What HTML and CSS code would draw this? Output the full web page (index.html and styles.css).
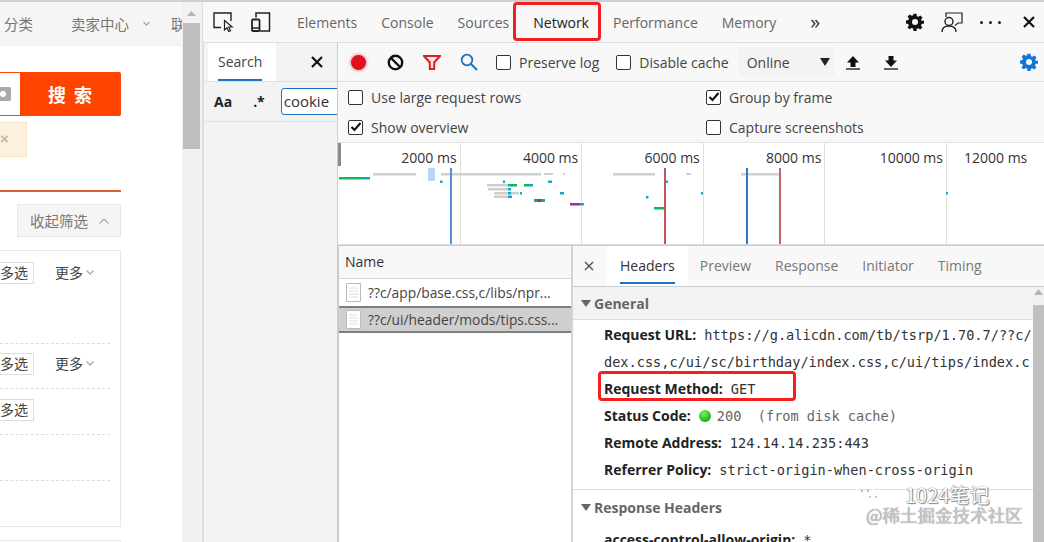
FILE: index.html
```html
<!DOCTYPE html>
<html lang="zh">
<head>
<meta charset="utf-8">
<title>Network</title>
<link rel="stylesheet" href="styles.css">
</head>
<body>
<div class="strip"></div>
<div class="app">
  <section class="page">
    <div class="page-main">
      <header class="site-nav">
        <span class="nav-cat">分类</span>
        <span class="nav-div"></span>
        <span class="nav-seller">卖家中心</span>
        <svg class="nav-caret" width="7" height="5" viewBox="0 0 7 5"><path d="M0.5 1l3 3 3-3" fill="none" stroke="#aaa" stroke-width="1.3"/></svg>
        <span class="nav-more">联</span>
      </header>
      <div class="search-row">
        <div class="search-input">
          <svg width="11" height="16" viewBox="0 0 11 16"><path d="M0 1h9a2 2 0 0 1 2 2v10a2 2 0 0 1-2 2H0z" fill="#a9a9a9"/><circle cx="3" cy="8" r="3" fill="#fff"/></svg>
        </div>
        <div class="search-btn">搜 索</div>
      </div>
      <div class="tip"><span>×</span></div>
      <div class="rule"></div>
      <div class="collapse-row"><div class="collapse-btn">收起筛选 <svg width="10" height="6" viewBox="0 0 10 6"><path d="M0.5 5.5L5 1l4.500 4.500" fill="none" stroke="#aaa" stroke-width="1.200"/></svg></div></div>
      <div class="filter-box">
        <div class="f-row f-row1"><span class="multi">多选</span><span class="more">更多<svg width="8" height="5" viewBox="0 0 8 5"><path d="M0.500 0.500L4 4l3.500-3.500" fill="none" stroke="#aaa" stroke-width="1.300"/></svg></span></div>
        <div class="f-row f-row2"><span class="multi">多选</span><span class="more">更多<svg width="8" height="5" viewBox="0 0 8 5"><path d="M0.500 0.500L4 4l3.500-3.500" fill="none" stroke="#aaa" stroke-width="1.300"/></svg></span></div>
        <div class="f-row f-row3"><span class="multi">多选</span></div>
        <div class="f-row f-row4"></div>
      </div>
      <div class="next-box"></div>
    </div>
    <div class="page-scroll">
      <svg class="up" width="9" height="5" viewBox="0 0 9 5"><path d="M4.500 0L9 5H0z" fill="#b5b5b5"/></svg>
      <div class="page-thumb"></div>
    </div>
  </section>

  <section class="devtools">
    <nav class="main-tabs">
      <div class="tool-ic first">
        <svg width="22" height="20" viewBox="0 0 22 20"><path d="M8 15.500H1V1h17v8" fill="none" stroke="#222" stroke-width="1.400"/><path d="M11.500 8.500v9.500l2.500-2.300 1.700 3.800 1.800-.8-1.700-3.700h3.400z" fill="#fff" stroke="#222" stroke-width="1.200"/></svg>
      </div>
      <div class="tool-ic">
        <svg width="20" height="20" viewBox="0 0 20 20"><path d="M5 5.500V1h13.500v18H9" fill="none" stroke="#222" stroke-width="1.500"/><rect x="1" y="7.500" width="7.500" height="11.500" rx="1" fill="none" stroke="#222" stroke-width="1.800"/><path d="M1 16h7.500" stroke="#222" stroke-width="1.500"/></svg>
      </div>
      <span class="tab t-elements">Elements</span>
      <span class="tab">Console</span>
      <span class="tab">Sources</span>
      <span class="tab active">Network</span>
      <span class="tab">Performance</span>
      <span class="tab">Memory</span>
      <span class="chev">»</span>
      <div class="tab-right">
        <svg class="gear" width="18" height="18" viewBox="0 0 24 24"><path fill="#111" fill-rule="evenodd" d="M10 1h4l.6 3.200 1.900.8 2.700-1.800 2.800 2.800-1.800 2.700.8 1.900L24 10v4l-3.200.6-.8 1.900 1.800 2.700-2.800 2.800-2.700-1.800-1.900.8L14 24h-4l-.6-3.200-1.900-.8-2.700 1.800L2 19.200l1.800-2.700-.8-1.900L0 14v-4l3.200-.6.8-1.900L2.200 4.800 5 2l2.700 1.800 1.900-.8zM12 8a4 4 0 1 0 0 8 4 4 0 0 0 0-8z"/></svg>
        <svg class="fb" width="22" height="21" viewBox="0 0 22 21"><path d="M5 5V1h16v10h-4l-3 2.500" fill="none" stroke="#222" stroke-width="1.200"/><circle cx="8" cy="9.500" r="4" fill="#f8f8f8" stroke="#222" stroke-width="1.400"/><path d="M1 20c0-4 3-6 7-6s7 2 7 6" fill="none" stroke="#222" stroke-width="1.400"/></svg>
        <span class="dots"><i></i><i></i><i></i></span>
        <svg class="close" width="12" height="12" viewBox="0 0 12 12"><path d="M1 1l10 10M11 1L1 11" stroke="#111" stroke-width="2.200"/></svg>
      </div>
    </nav>

    <div class="work">
      <aside class="search-panel">
        <div class="sp-head">
          <span class="sp-tab">Search</span>
          <svg width="12" height="12" viewBox="0 0 12 12"><path d="M1 1l10 10M11 1L1 11" stroke="#111" stroke-width="2.200"/></svg>
        </div>
        <div class="sp-row">
          <b class="aa">Aa</b>
          <b class="re">.*</b>
          <span class="sp-input">cookie</span>
        </div>
      </aside>

      <div class="network">
        <div class="net-bar">
          <span class="rec"></span>
          <svg class="ic-block" width="17" height="17" viewBox="0 0 17 17"><circle cx="8.500" cy="8.500" r="6.700" fill="none" stroke="#111" stroke-width="2.400"/><path d="M4 4l9 9" stroke="#111" stroke-width="2.400"/></svg>
          <svg class="ic-funnel" width="18" height="15" viewBox="0 0 18 15"><path d="M1 1h16l-5.800 6.500V14H6.800V7.500z" fill="#fbe5e5" stroke="#d81e1e" stroke-width="2"/></svg>
          <svg class="ic-search" width="18" height="18" viewBox="0 0 18 18"><circle cx="7" cy="7" r="5.300" fill="none" stroke="#1a73c5" stroke-width="1.800"/><path d="M11 11l6 6" stroke="#1a73c5" stroke-width="2"/></svg>
          <label class="chk-label c-preserve"><span class="chk"></span>Preserve log</label>
          <label class="chk-label c-cache"><span class="chk"></span>Disable cache</label>
          <div class="throttle"><span>Online</span><svg width="10" height="8" viewBox="0 0 10 8"><path d="M0 0h10L5 8z" fill="#222"/></svg></div>
          <svg class="ic-up" width="14" height="15" viewBox="0 0 14 15"><path d="M7 1l6 6.500H9.500V12h-5V7.500H1z" fill="#111"/><path d="M0 14h14" stroke="#111" stroke-width="1.300"/></svg>
          <svg class="ic-down" width="14" height="15" viewBox="0 0 14 15"><path d="M7 12L1 5.500h3.500V1h5v4.500H13z" fill="#111"/><path d="M0 14h14" stroke="#111" stroke-width="1.300"/></svg>
          <svg class="ic-gear" width="18" height="18" viewBox="0 0 24 24"><path fill="#0f78d4" fill-rule="evenodd" d="M10 1h4l.6 3.200 1.900.8 2.700-1.800 2.800 2.800-1.800 2.700.8 1.900L24 10v4l-3.200.6-.8 1.900 1.800 2.700-2.800 2.800-2.700-1.800-1.900.8L14 24h-4l-.6-3.200-1.900-.8-2.700 1.800L2 19.200l1.800-2.700-.8-1.900L0 14v-4l3.200-.6.8-1.900L2.200 4.800 5 2l2.700 1.800 1.900-.8zM12 8a4 4 0 1 0 0 8 4 4 0 0 0 0-8z"/></svg>
        </div>
        <div class="net-settings">
          <label class="chk-label"><span class="chk"></span>Use large request rows</label>
          <label class="chk-label"><span class="chk on"><svg width="12" height="10" viewBox="0 0 12 10"><path d="M1.500 5l3 3 6-7" fill="none" stroke="#111" stroke-width="2.200"/></svg></span>Group by frame</label>
          <label class="chk-label"><span class="chk on"><svg width="12" height="10" viewBox="0 0 12 10"><path d="M1.500 5l3 3 6-7" fill="none" stroke="#111" stroke-width="2.200"/></svg></span>Show overview</label>
          <label class="chk-label"><span class="chk"></span>Capture screenshots</label>
        </div>
        <div class="timeline">
          <div class="ticks">
            <span>2000 ms</span><span>4000 ms</span><span>6000 ms</span><span>8000 ms</span><span>10000 ms</span><span>12000 ms</span>
          </div>
          <svg class="bars" width="706" height="102" viewBox="338 143 706 102">
            <rect x="338" y="143" width="3" height="23" fill="#8a8a8a"/>
            <g fill="#cfcfcf">
              <rect x="373" y="173" width="43" height="2.500"/><rect x="441" y="173" width="100" height="2.500"/><rect x="544" y="173" width="9" height="2"/><rect x="563" y="173" width="2" height="2"/><rect x="613" y="173" width="42" height="2.500"/><rect x="686" y="173" width="5" height="2"/><rect x="741" y="173" width="39" height="2.500"/>
              <rect x="487" y="184" width="21" height="2.500"/><rect x="488" y="188" width="20" height="2.500"/><rect x="494" y="192" width="14" height="2.500"/><rect x="511" y="192" width="8" height="2.500"/><rect x="494" y="195.500" width="14" height="2.500"/>
            </g>
            <rect x="428" y="168" width="7" height="13" fill="#b8d5f7"/>
            <g fill="#0cb860">
              <rect x="339" y="177" width="25" height="2.500"/><rect x="508" y="184" width="9" height="2.500"/><rect x="524" y="184" width="6" height="2.500"/><rect x="534" y="199" width="3" height="3"/><rect x="541" y="199" width="4" height="3"/><rect x="654" y="207" width="10" height="2.500"/>
            </g>
            <g fill="#1ba3c9">
              <rect x="364" y="177" width="6" height="2.500"/><rect x="440" y="180.500" width="2.500" height="2.500"/><rect x="503" y="180.500" width="2" height="2.500"/><rect x="548" y="180.500" width="4" height="2.500"/><rect x="530" y="184" width="3" height="2.500"/><rect x="508" y="188" width="3" height="2.500"/><rect x="508" y="192" width="3" height="2.500"/><rect x="520" y="192" width="2" height="2.500"/><rect x="560" y="192" width="4" height="2.500"/><rect x="508" y="195.500" width="4" height="2.500"/><rect x="580" y="203" width="4" height="2.500"/><rect x="664" y="180.500" width="4" height="2.500"/><rect x="646" y="196" width="2.500" height="2.500"/><rect x="701" y="192" width="2" height="2.500"/><rect x="946" y="192" width="2" height="2.500"/>
            </g>
            <g fill="#a32f8e">
              <rect x="537" y="199" width="4" height="3"/><rect x="570" y="203" width="10" height="2.500"/>
            </g>
            <rect x="450" y="168" width="2" height="76" fill="#5393d3"/>
            <rect x="746" y="168" width="2" height="76" fill="#2a7ccb"/>
            <rect x="664" y="168" width="2" height="76" fill="#c2565c"/>
            <rect x="779" y="168" width="2" height="76" fill="#bc666c"/>
          </svg>
        </div>
        <div class="split">
          <div class="names">
            <div class="names-head">Name</div>
            <div class="req">
              <svg width="15" height="19" viewBox="0 0 15 19"><path d="M.5.500h14v18H.500z" fill="#fff" stroke="#bbb"/><path d="M3 5h9M3 8h9M3 11h9M3 14h9" stroke="#ddd"/></svg>
              <span>??c/app/base.css,c/libs/npr...</span>
            </div>
            <div class="req sel">
              <svg width="15" height="19" viewBox="0 0 15 19"><path d="M.5.500h14v18H.500z" fill="#fff" stroke="#bbb"/><path d="M3 5h9M3 8h9M3 11h9M3 14h9" stroke="#ddd"/></svg>
              <span>??c/ui/header/mods/tips.css...</span>
            </div>
          </div>
          <div class="details">
            <div class="d-tabs">
              <svg class="d-x" width="10" height="10" viewBox="0 0 10 10"><path d="M1 1l8 8M9 1L1 9" stroke="#555" stroke-width="1.500"/></svg>
              <span class="d-tab on">Headers</span>
              <span class="d-tab">Preview</span>
              <span class="d-tab">Response</span>
              <span class="d-tab">Initiator</span>
              <span class="d-tab">Timing</span>
            </div>
            <div class="d-body">
              <div class="d-content">
                <div class="sec-head"><i class="tri"></i>General</div>
                <div class="rows">
                  <div class="kv"><b>Request URL:</b><code>https://g.alicdn.com/tb/tsrp/1.70.7/??c/</code></div>
                  <div class="kv"><code class="wrap">dex.css,c/ui/sc/birthday/index.css,c/ui/tips/index.c</code></div>
                  <div class="kv"><b>Request Method:</b><code>GET</code></div>
                  <div class="kv"><b>Status Code:</b><span class="dot"></span><code class="dim">200  (from disk cache)</code></div>
                  <div class="kv"><b>Remote Address:</b><code>124.14.14.235:443</code></div>
                  <div class="kv"><b>Referrer Policy:</b><code>strict-origin-when-cross-origin</code></div>
                </div>
                <div class="sec-head2"><i class="tri"></i>Response Headers</div>
                <div class="kv kv-last"><b>access-control-allow-origin:</b><code>*</code></div>
              </div>
              <div class="d-scroll">
                <svg width="9" height="6" viewBox="0 0 9 6"><path d="M4.500 0L9 6H0z" fill="#b5b5b5"/></svg>
                <div class="d-thumb"></div>
              </div>
            </div>
          </div>
        </div>
      </div>
    </div>
  </section>
</div>

<div class="mark mark-net"></div>
<div class="mark mark-method"></div>

<div class="wm">
  <svg class="wm-logo" width="28" height="26" viewBox="0 0 28 26"><g fill="none" stroke="#fff" stroke-width="1.500"><ellipse cx="10" cy="10" rx="9" ry="8"/><ellipse cx="18" cy="15" rx="8" ry="6.500"/></g><g fill="#bbb"><circle cx="7" cy="8" r="1.200"/><circle cx="13" cy="8" r="1.200"/><circle cx="15" cy="14" r="1"/><circle cx="21" cy="14" r="1"/></g></svg>
  <span class="wm-title">1024笔记</span>
  <span class="wm-sub">@稀土掘金技术社区</span>
</div>
</body>
</html>
```

FILE: styles.css
```css
* { box-sizing: border-box; }
html, body { margin: 0; padding: 0; }
body {
  width: 1044px; height: 542px; overflow: hidden; position: relative;
  font-family: "Open Sans", "Noto Sans CJK SC", sans-serif;
  font-size: 14px; color: #333; background: #fff;
}
.strip { height: 2px; background: #cfcfcf; }
.app { display: flex; height: 540px; }

/* left web page */
.page { width: 203px; flex: none; display: flex; overflow: hidden; background: #fff; }
.page-main { width: 182px; flex: none; overflow: hidden; font-family: "Noto Sans CJK SC", sans-serif; }
.site-nav {
  height: 44px; background: #f5f5f5; border-bottom: 1px solid #eee;
  display: flex; align-items: center; color: #777; font-size: 14.500px; white-space: nowrap; overflow: hidden;
}
.nav-cat { margin-left: 4px; width: 30px; }
.nav-div { width: 1px; height: 13px; background: #ddd; margin-left: 23px; }
.nav-seller { margin-left: 15px; width: 60px; }
.nav-caret { margin-left: 14px; flex: none; }
.nav-more { margin-left: 21px; }
.search-row { display: flex; width: 121px; height: 44px; margin-top: 26px; }
.search-input {
  width: 21px; height: 44px; border: 1px solid #f40; border-left: 0;
  display: flex; align-items: center; background: #fff;
}
.search-btn {
  width: 100px; height: 44px; background: #f40; color: #fff; border-radius: 0 2px 2px 0;
  font-size: 18px; font-weight: 700; text-align: center; line-height: 44px; letter-spacing: 2px;
}
.tip {
  width: 27px; height: 35px; margin-top: 6px; background: #fdf1de; border: 1px solid #f8e6c8; border-left: 0;
  color: #bbb; font: 700 15px/32px "Liberation Sans", sans-serif;
}
.rule { width: 121px; height: 2px; background: #d9602b; margin-top: 33px; }
.collapse-row { display: flex; justify-content: flex-end; width: 121px; margin-top: 12px; }
.collapse-btn {
  width: 104px; height: 33px; border: 1px solid #e8e8e8; background: #f5f5f5; color: #777;
  font-size: 14.500px; display: flex; align-items: center; gap: 11px; padding-left: 12px;
}
.filter-box { width: 121px; height: 277px; margin-top: 13px; border: 1px solid #e8e8e8; border-left: 0; padding-right: 10px; }
.f-row { display: flex; align-items: flex-start; border-bottom: 1px dashed #ddd; font-size: 14px; color: #444; }
.f-row1 { height: 93px; padding-top: 11px; }
.f-row2 { height: 45px; padding-top: 9px; }
.f-row3 { height: 46px; padding-top: 10px; }
.f-row4 { height: 46px; }
.multi { width: 34px; height: 22px; border: 1px solid #ddd; border-left: 0; text-align: right; padding-right: 5px; line-height: 19px; flex: none; }
.more { margin-left: 21px; display: flex; align-items: center; gap: 3px; line-height: 20px; }
.next-box { width: 121px; height: 10px; margin-top: 13px; border: 1px solid #e8e8e8; border-left: 0; }
.page-scroll { width: 21px; flex: none; background: #f1f1f1; border-right: 1px solid #ddd; display: flex; flex-direction: column; align-items: center; padding-top: 9px; }
.page-scroll .up { margin-right: 2px; }
.page-thumb { width: 17px; height: 126px; background: #bfbfbf; margin: 7px 2px 0 0; }

/* devtools */
.devtools { flex: 1; min-width: 0; display: flex; flex-direction: column; background: #f8f8f8; }
.main-tabs { height: 41px; flex: none; display: flex; align-items: center; border-bottom: 1px solid #ddd; color: #666; white-space: nowrap; background: #f8f8f8; }
.tool-ic { display: flex; align-items: center; }
.tool-ic.first { margin-left: 10px; }
.tool-ic + .tool-ic { margin-left: 16px; }
.tab { padding: 0 12px; }
.t-elements { margin-left: 14px; }
.tab.active { color: #222; }
.tab + .tab { margin-left: 0; }
.chev { margin-left: 22px; font-size: 20px; line-height: 20px; color: #333; }
.tab-right { margin-left: auto; display: flex; align-items: center; padding-right: 9px; }
.fb { margin-left: 17px; }
.dots { display: flex; gap: 6px; margin-left: 17px; }
.dots i { width: 3px; height: 3px; border-radius: 50%; background: #222; }
.close { margin-left: 22px; }
.gear { flex: none; }

.work { flex: 1; min-height: 0; display: flex; }
.search-panel { width: 135px; flex: none; background: #f3f3f3; border-left: 1px solid #ddd; border-right: 1px solid #ccc; overflow: hidden; }
.sp-head { height: 39px; display: flex; align-items: center; border-bottom: 1px solid #e0e0e0; position: relative; }
.sp-head svg { margin-left: 35px; }
.sp-tab { width: 68px; height: 38px; margin-left: 4px; background: #fff; color: #444; padding: 9px 0 0 10px; line-height: 20px; position: relative; box-shadow: inset 0 -2px 0 #fff; }
.sp-tab::after { content: ""; position: absolute; left: 10px; width: 44px; bottom: 0; height: 2px; background: #1a73c5; }
.sp-row { height: 40px; display: flex; align-items: center; border-bottom: 1px solid #e0e0e0; }
.aa { margin-left: 10px; font-family: "Open Sans", sans-serif; color: #222; }
.re { margin-left: 21px; color: #222; }
.sp-input { margin-left: 16px; flex: none; width: 70px; height: 27px; border: 1px solid #1a73c5; border-radius: 3px; padding-left: 2px; line-height: 25px; background: #fff; color: #333; font-size: 15px; }

.network { flex: 1; min-width: 0; display: flex; flex-direction: column; }
.net-bar { height: 39px; flex: none; display: flex; align-items: center; border-bottom: 1px solid #ddd; background: #f8f8f8; white-space: nowrap; color: #444; }
.rec { width: 15px; height: 15px; border-radius: 50%; background: #e0101d; box-shadow: 0 0 3px 1px rgba(224,16,29,.4); margin-left: 13px; flex: none; }
.ic-block { margin-left: 21px; }
.ic-funnel { margin-left: 19px; }
.ic-search { margin-left: 19px; }
.chk-label { display: flex; align-items: center; gap: 8px; color: #444; }
.chk { width: 15px; height: 15px; border: 1px solid #333; border-radius: 2px; background: #fff; display: flex; align-items: center; justify-content: center; flex: none; }
.c-preserve { margin-left: 18px; }
.c-cache { margin-left: 17px; }
.throttle { margin-left: 10px; width: 96px; height: 30px; padding: 0 5px 0 8px; background: #f3f3f3; display: flex; align-items: center; justify-content: space-between; color: #444; }
.ic-up { margin-left: 11px; }
.ic-down { margin-left: 24px; }
.ic-gear { margin-left: auto; margin-right: 6px; }

.net-settings {
  height: 61px; flex: none; display: grid; grid-template-columns: 358px 1fr; grid-auto-rows: 30px;
  align-content: center; padding-left: 10px; background: #f8f8f8; border-bottom: 1px solid #e2e2e2;
}
.net-settings .chk-label:nth-child(even) { margin-left: 0; }

.timeline { height: 102px; flex: none; background: #fff; position: relative; overflow: hidden; border-bottom: 1px solid #ddd; }
.ticks { display: grid; grid-template-columns: repeat(6, 121.600px); height: 100%; margin-left: 1px; color: #333; white-space: nowrap; }
.ticks span { border-right: 1px solid #e0e0e0; text-align: right; padding: 5px 3px 0 0; line-height: 20px; }
.ticks span:last-child { border-right: 0; text-align: left; padding-left: 17px; }
.bars { position: absolute; left: 0; top: 0; }

.split { flex: 1; min-height: 0; display: flex; border-top: 1px solid #ccc; }
.names { width: 235px; flex: none; background: #fff; border-left: 1px solid #ccc; border-right: 2px solid #d4d4d4; }
.names-head { height: 33px; background: #f8f8f8; border-bottom: 1px solid #d8d8d8; padding: 6px 0 0 6px; line-height: 20px; color: #333; }
.req { height: 27px; display: flex; align-items: center; gap: 7px; padding-left: 7px; color: #444; white-space: nowrap; overflow: hidden; font-size: 13.800px; }
.req.sel { background: #cfcfcf; border-top: 2px solid #7f7f7f; border-bottom: 2px solid #7f7f7f; }
.details { flex: 1; min-width: 0; display: flex; flex-direction: column; background: #fff; }
.d-tabs { height: 41px; flex: none; display: flex; align-items: center; background: #f8f8f8; border-bottom: 1px solid #ccc; color: #777; }
.d-x { margin-left: 11px; margin-right: 13px; }
.d-tab { padding: 0 12px; height: 40px; line-height: 40px; }
.d-tab.on { color: #333; background: #fff; padding: 0 13px; position: relative; }
.d-tab.on::after { content: ""; position: absolute; left: 13px; right: 13px; bottom: 2px; height: 2px; background: #1a73c5; }
.d-body { flex: 1; min-height: 0; display: flex; }
.d-content { flex: 1; min-width: 0; overflow: hidden; }
.sec-head { height: 33px; background: #f3f3f3; border-bottom: 1px solid #ddd; color: #666; font-weight: 700; display: flex; align-items: center; padding-left: 8px; }
.tri { width: 0; height: 0; border: 5px solid transparent; border-top: 7px solid #666; border-bottom: 0; margin-right: 3px; }
.rows { padding-top: 1px; border-bottom: 1px solid #ddd; padding-bottom: 6px; }
.kv { height: 27px; display: flex; align-items: center; padding-left: 31px; white-space: nowrap; color: #222; }
.kv b { font-weight: 700; color: #222; font-size: 14px; margin-right: 8px; }
code { font-family: "DejaVu Sans Mono", monospace; font-size: 13.600px; color: #333; white-space: pre; }
.dim { color: #666; }
.dot { width: 12px; height: 12px; border-radius: 50%; background: radial-gradient(circle at 40% 30%, #7fee6a, #17b50f 70%); margin-right: 6px; flex: none; }
.sec-head2 { height: 35px; color: #666; font-weight: 700; display: flex; align-items: center; padding-left: 8px; }
.kv-last { margin-top: 1px; }
.d-scroll { width: 11px; flex: none; background: #f1f1f1; display: flex; flex-direction: column; align-items: center; padding-top: 2px; }
.d-thumb { width: 11px; flex: 1; background: #c0c0c0; margin-top: 10px; }

/* annotations over the screenshot */
.mark { position: absolute; border: 3px solid #f42020; border-radius: 4px; }
.mark-net { left: 513px; top: 2px; width: 88px; height: 39px; }
.mark-method { left: 598px; top: 371px; width: 198px; height: 30px; }

.wm { position: absolute; left: 855px; top: 483px; width: 180px; height: 44px; }
.wm-logo { position: absolute; left: 0; top: 0; }
.wm-title { position: absolute; left: 50px; top: -4px; font: 20px/32px "Noto Sans CJK SC", sans-serif; color: #fff; text-shadow: 0 0 1px #777, 0 0 1px #777, 1px 1px 1px #888; white-space: nowrap; }
.wm-sub { position: absolute; left: 11px; top: 20px; font: 17.500px/24px "Noto Sans CJK SC", sans-serif; color: #c9c9c9; text-shadow: 0 0 1px #777; white-space: nowrap; }
```
